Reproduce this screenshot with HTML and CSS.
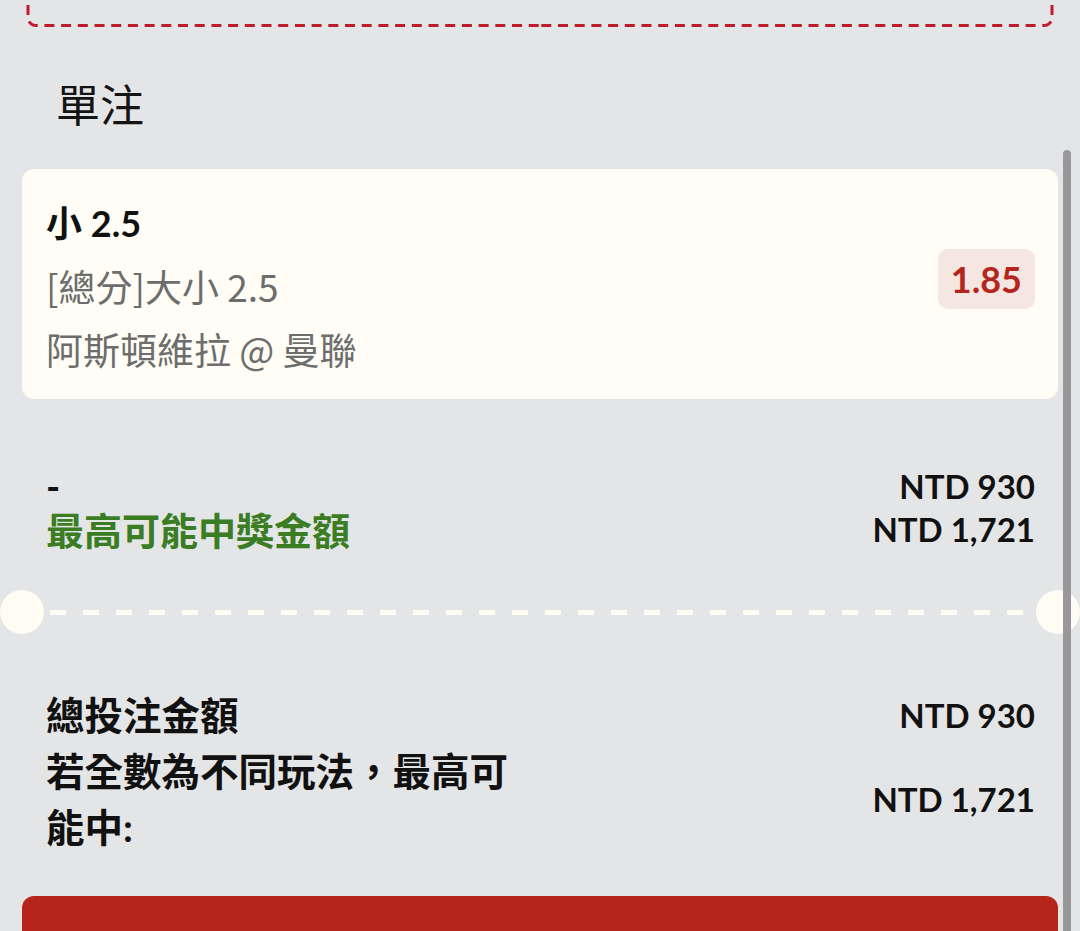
FILE: index.html
```html
<!DOCTYPE html>
<html lang="zh-Hant">
<head>
<meta charset="utf-8">
<title>單注</title>
<link rel="stylesheet" href="styles.css">
</head>
<body>
<div class="page">
  <svg class="top-box" width="1080" height="30" viewBox="0 0 1080 30">
    <path d="M28,-11.7 V17.5 A8,8 0 0 0 36,25.5 H540" />
    <path d="M1052,-11.7 V17.5 A8,8 0 0 1 1044,25.5 H540" />
  </svg>

  <h1 class="title">單注</h1>

  <div class="bet-card">
    <div class="bet-info">
      <div class="bet-pick">小 2.5</div>
      <div class="bet-market">[總分]大小 2.5</div>
      <div class="bet-match">阿斯頓維拉 @ 曼聯</div>
    </div>
    <div class="odds">1.85</div>
  </div>

  <div class="stake-rows">
    <div class="row">
      <span class="row-label">-</span>
      <span class="amount">NTD 930</span>
    </div>
    <div class="row">
      <span class="row-label green">最高可能中獎金額</span>
      <span class="amount">NTD 1,721</span>
    </div>
  </div>

  <div class="divider">
    <span class="notch"></span>
    <span class="dash-line"></span>
    <span class="notch"></span>
  </div>

  <div class="summary">
    <div class="summary-row">
      <span class="summary-label">總投注金額</span>
      <span class="amount">NTD 930</span>
    </div>
    <div class="summary-row">
      <span class="summary-label">若全數為不同玩法，最高可能中:</span>
      <span class="amount">NTD 1,721</span>
    </div>
  </div>

  <div class="place-bet"></div>

  <div class="scrollbar"></div>
</div>
</body>
</html>
```

FILE: styles.css
```css
html, body {
  margin: 0;
  padding: 0;
  height: 931px;
  overflow: hidden;
}

body {
  background: #e4e5e7;
  font-family: Lato, "Noto Sans CJK TC", sans-serif;
  color: #111;
}

.page {
  position: relative;
  width: 1080px;
}

.top-box {
  display: block;
}

.top-box path {
  fill: none;
  stroke: #bf1b2c;
  stroke-width: 3;
  stroke-dasharray: 10 6.7;
}

.title {
  margin: 43px 0 0 56px;
  font-family: "Noto Sans CJK TC", sans-serif;
  font-size: 44px;
  font-weight: 400;
  line-height: 60px;
  color: #141414;
}

.bet-card {
  margin: 36px 22px 0;
  padding: 23px 23px 18px 24px;
  background: #fffdf5;
  border-radius: 12px;
  display: flex;
  align-items: center;
  justify-content: space-between;
}

.bet-info {
  display: flex;
  flex-direction: column;
}

.bet-pick {
  font-size: 36px;
  font-weight: 700;
  line-height: 63px;
  color: #111;
}

.bet-market,
.bet-match {
  font-family: "Noto Sans CJK TC", sans-serif;
  font-size: 37px;
  line-height: 63px;
  color: #6d6d6d;
}

.odds {
  height: 60px;
  line-height: 60px;
  padding: 0 13px;
  margin-bottom: 16px;
  background: #f6e6e1;
  border-radius: 10px;
  color: #b3261e;
  font-size: 36px;
  font-weight: 700;
}

.stake-rows {
  margin: 65px 45px 0 46px;
}

.row {
  display: flex;
  justify-content: space-between;
  align-items: center;
  height: 43px;
}

.row-label {
  font-size: 38px;
  font-weight: 700;
  color: #111;
}

.row-label.green {
  color: #3b7d23;
}

.amount {
  font-size: 33px;
  font-weight: 700;
  color: #111;
}

.divider {
  margin-top: 40px;
  display: flex;
  align-items: center;
  height: 44px;
}

.notch {
  width: 44px;
  height: 44px;
  border-radius: 50%;
  background: #fffdf3;
  flex: none;
}

.dash-line {
  flex: 1;
  height: 5px;
  margin: 0 6px;
  background: repeating-linear-gradient(to right, #fffdf3 0 16px, transparent 16px 33px);
}

.summary {
  margin: 53px 45px 0 46px;
}

.summary-row {
  display: flex;
  justify-content: space-between;
  align-items: center;
}

.summary-label {
  width: 475px;
  font-size: 38.5px;
  font-weight: 700;
  line-height: 56px;
  color: #111;
}

.place-bet {
  margin: 41px 22px 0;
  height: 120px;
  border-radius: 12px;
  background: #b5251b;
}

.scrollbar {
  position: absolute;
  top: 150px;
  left: 1063px;
  width: 8px;
  height: 820px;
  border-radius: 4px;
  background: #98989b;
}
```
